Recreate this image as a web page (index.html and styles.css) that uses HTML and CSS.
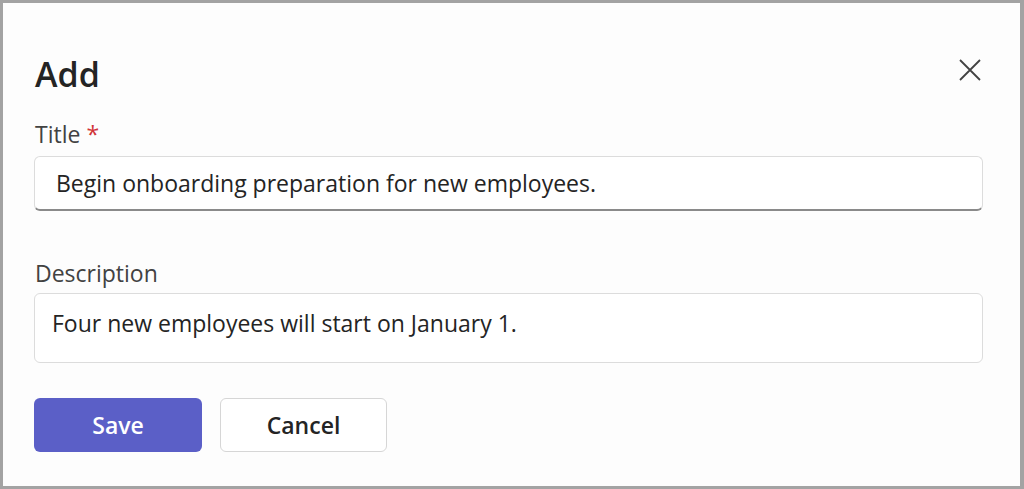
FILE: index.html
```html
<!DOCTYPE html>
<html lang="en">
<head>
<meta charset="utf-8">
<title>Add</title>
<link rel="stylesheet" href="styles.css">
</head>
<body>
<div class="frame">
  <div class="dialog">
    <div class="header">
      <h1 class="heading">Add</h1>
      <button class="close" aria-label="Close">
        <svg width="24" height="24" viewBox="0 0 24 24"><path d="M2 2 L22 22 M22 2 L2 22" stroke="#424242" stroke-width="1.8" fill="none"/></svg>
      </button>
    </div>
    <label class="label label-title">Title <span class="req">*</span></label>
    <div class="input input-title">Begin onboarding preparation for new employees.</div>
    <label class="label label-desc">Description</label>
    <div class="input input-desc">Four new employees will start on January 1.</div>
    <div class="actions">
      <button class="btn btn-primary">Save</button>
      <button class="btn btn-secondary">Cancel</button>
    </div>
  </div>
</div>
</body>
</html>
```

FILE: styles.css
```css
html, body {
  margin: 0;
  padding: 0;
  background: #fdfdfd;
}
.frame {
  box-sizing: border-box;
  width: 1024px;
  height: 489px;
  border: 3px solid #a3a3a3;
  border-right-width: 4px;
  background: #fdfdfd;
  font-family: "Open Sans", "Noto Sans", sans-serif;
  color: #242424;
}
.dialog {
  display: flex;
  flex-direction: column;
  padding: 0 37px 0 31px;
}
.header {
  display: flex;
  justify-content: space-between;
  align-items: flex-start;
  height: 56px;
  margin-top: 43px;
}
.heading {
  margin: 0 0 0 1px;
  font-size: 34px;
  font-weight: 600;
  line-height: 56px;
  color: #242424;
}
.close {
  border: none;
  background: none;
  padding: 0;
  margin: 12px 1px 0 0;
  width: 24px;
  height: 24px;
  display: flex;
}
.label {
  font-size: 23px;
  line-height: 30px;
  color: #424242;
  margin-left: 1px;
}
.label-title {
  margin-top: 17px;
}
.req {
  color: #d13438;
}
.input {
  box-sizing: border-box;
  border: 1px solid #dcdcdc;
  border-radius: 6px;
  background: #ffffff;
  font-size: 23px;
  color: #242424;
}
.input-title {
  margin-top: 7px;
  height: 55px;
  line-height: 52px;
  padding: 0 21px;
  border-bottom: 2px solid #8a8a8a;
}
.label-desc {
  margin-top: 47px;
}
.input-desc {
  margin-top: 5px;
  height: 70px;
  padding: 14px 17px;
  line-height: 30px;
}
.actions {
  display: flex;
  gap: 18px;
  margin-top: 35px;
}
.btn {
  box-sizing: border-box;
  height: 54px;
  width: 167px;
  border-radius: 6px;
  font-family: "Open Sans", "Noto Sans", sans-serif;
  font-size: 23px;
  font-weight: 600;
  cursor: pointer;
}
.btn-primary {
  background: #5b5fc7;
  color: #ffffff;
  border: none;
  width: 168px;
}
.btn-secondary {
  background: #ffffff;
  color: #242424;
  border: 1px solid #d6d6d6;
}
```
